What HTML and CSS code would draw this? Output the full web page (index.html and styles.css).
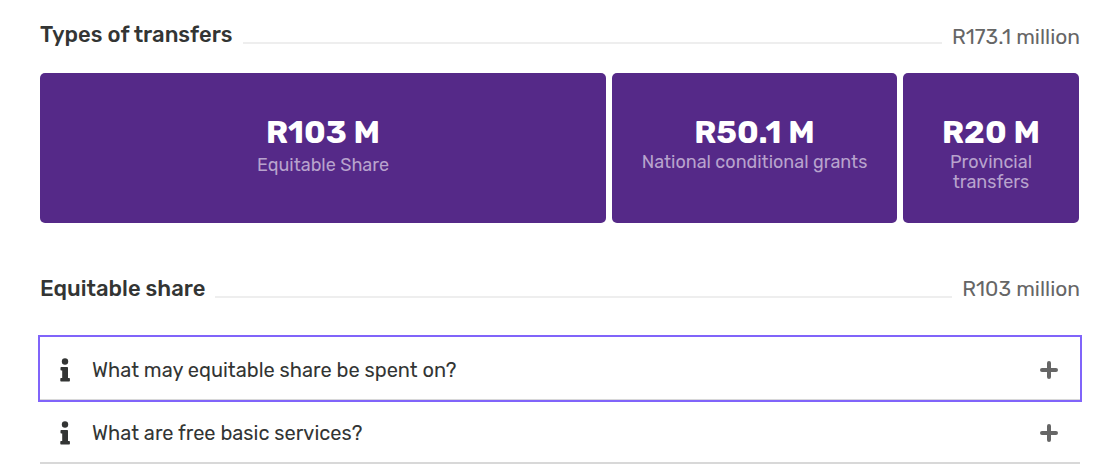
FILE: index.html
```html
<!DOCTYPE html>
<html lang="en">
<head>
<meta charset="utf-8">
<meta name="viewport" content="width=device-width, initial-scale=1">
<title>Transfers</title>
<link rel="stylesheet" href="styles.css">
</head>
<body>
<main class="page">
  <section class="transfers">
    <header class="heading">
      <h2 class="heading-title">Types of transfers</h2>
      <span class="heading-line"></span>
      <span class="heading-amount heading-amount-low">R173.1 million</span>
    </header>
    <div class="cards">
      <article class="card">
        <strong class="card-value">R103 M</strong>
        <span class="card-label card-label-wide">Equitable Share</span>
      </article>
      <article class="card">
        <strong class="card-value">R50.1 M</strong>
        <span class="card-label">National conditional grants</span>
      </article>
      <article class="card">
        <strong class="card-value">R20 M</strong>
        <span class="card-label">Provincial transfers</span>
      </article>
    </div>
  </section>
  <section class="share">
    <header class="heading">
      <h2 class="heading-title">Equitable share</h2>
      <span class="heading-line"></span>
      <span class="heading-amount">R103 million</span>
    </header>
    <div class="questions">
      <button class="question question-active" type="button" aria-expanded="false">
        <svg class="info" viewBox="0 0 10 24" aria-hidden="true"><circle cx="5" cy="3.5" r="3.2"/><path d="M1.3 9h5.9q.8 0 .8.8V20h1.2q.7 0 .7.7v2.1q0 .7-.7.7H1q-.7 0-.7-.7v-2.1q0-.7.7-.7h1.200v-7.500h-.9q-.8 0-.8-.7V9.800q0-.8.8-.8z"/></svg>
        <span class="question-text">What may equitable share be spent on?</span>
        <svg class="plus" viewBox="0 0 18 18" aria-hidden="true"><path d="M9 2v14M2 9h14"/></svg>
      </button>
      <button class="question" type="button" aria-expanded="false">
        <svg class="info" viewBox="0 0 10 24" aria-hidden="true"><circle cx="5" cy="3.5" r="3.2"/><path d="M1.3 9h5.9q.8 0 .8.8V20h1.2q.7 0 .7.7v2.1q0 .7-.7.7H1q-.7 0-.7-.7v-2.1q0-.7.7-.7h1.200v-7.500h-.9q-.8 0-.8-.7V9.800q0-.8.8-.8z"/></svg>
        <span class="question-text">What are free basic services?</span>
        <svg class="plus" viewBox="0 0 18 18" aria-hidden="true"><path d="M9 2v14M2 9h14"/></svg>
      </button>
    </div>
  </section>
</main>
</body>
</html>
```
FILE: styles.css
```css
* {
  box-sizing: border-box;
}

body {
  margin: 0;
  background: #fff;
  color: #333534;
  font-family: Rubik, Roboto, "Liberation Sans", sans-serif;
}

.page {
  padding: 21px 25px 0 40px;
}

.heading {
  display: flex;
  align-items: flex-start;
  gap: 10px;
}

.heading-title {
  margin: 0;
  font-size: 22px;
  font-weight: 500;
  line-height: 28px;
}

.heading-line {
  flex: 1;
  height: 23px;
  border-bottom: 2px solid #eee;
}

.heading-amount {
  color: #666;
  font-size: 21px;
  line-height: 28px;
}

.heading-amount-low {
  padding-top: 2px;
}

.cards {
  display: grid;
  grid-template-columns: 566fr 285fr 176fr;
  gap: 6px;
  margin: 22px 1px 0 0;
}

.card {
  display: flex;
  flex-direction: column;
  align-items: center;
  min-height: 150px;
  padding: 39px 24px 20px;
  border-radius: 5px;
  background: #552988;
  color: #fff;
  text-align: center;
}

.card-value {
  font-size: 32px;
  font-weight: 700;
  line-height: 40px;
}

.card-label {
  color: #b8a3cd;
  font-size: 18px;
  line-height: 20px;
}

.card-label-wide {
  line-height: 26px;
}

.share {
  margin-top: 52px;
}

.questions {
  margin-top: 34px;
}

.question {
  display: flex;
  align-items: center;
  width: 100%;
  padding: 19px 22px 15px 20px;
  border: 0;
  border-bottom: 2px solid #d8d8d8;
  background: #fff;
  color: #333534;
  font-family: inherit;
  font-size: 20px;
  line-height: 28px;
  text-align: left;
}

.question-active {
  border-bottom-width: 1px;
  outline: 2px solid #8064fa;
}

.question-text {
  flex: 1;
  margin-left: 22px;
}

.info {
  width: 10px;
  height: 24px;
  fill: #333534;
}

.plus {
  width: 18px;
  height: 18px;
  fill: none;
  stroke: #666;
  stroke-width: 4;
  stroke-linecap: round;
}
```
